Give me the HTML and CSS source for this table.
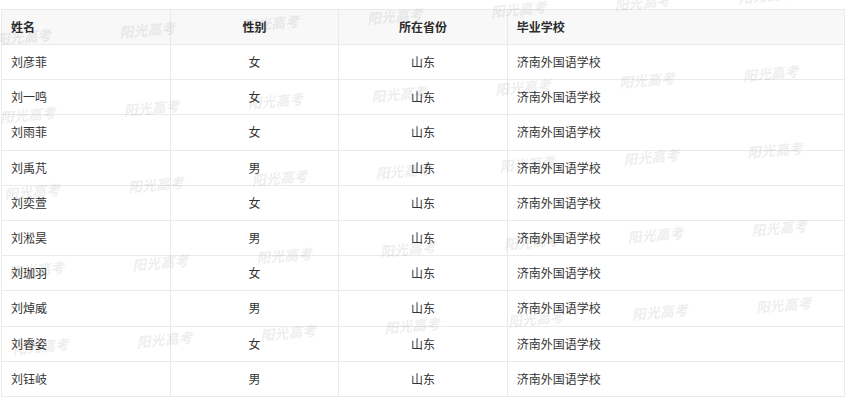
FILE: index.html
```html
<!DOCTYPE html>
<html lang="zh-CN">
<head>
<meta charset="utf-8">
<title>名单</title>
<link rel="stylesheet" href="styles.css">
</head>
<body>
<div class="page">
  <table class="grid-table">
    <colgroup>
      <col class="c-name"><col class="c-sex"><col class="c-prov"><col class="c-school">
    </colgroup>
    <thead>
      <tr class="head-row">
        <th class="left">姓名</th>
        <th class="center">性别</th>
        <th class="center">所在省份</th>
        <th class="left">毕业学校</th>
      </tr>
    </thead>
    <tbody>
      <tr><td class="left">刘彦菲</td><td class="center">女</td><td class="center">山东</td><td class="left">济南外国语学校</td></tr>
      <tr><td class="left">刘一鸣</td><td class="center">女</td><td class="center">山东</td><td class="left">济南外国语学校</td></tr>
      <tr><td class="left">刘雨菲</td><td class="center">女</td><td class="center">山东</td><td class="left">济南外国语学校</td></tr>
      <tr><td class="left">刘禹芃</td><td class="center">男</td><td class="center">山东</td><td class="left">济南外国语学校</td></tr>
      <tr><td class="left">刘奕萱</td><td class="center">女</td><td class="center">山东</td><td class="left">济南外国语学校</td></tr>
      <tr><td class="left">刘淞昊</td><td class="center">男</td><td class="center">山东</td><td class="left">济南外国语学校</td></tr>
      <tr><td class="left">刘珈羽</td><td class="center">女</td><td class="center">山东</td><td class="left">济南外国语学校</td></tr>
      <tr><td class="left">刘焯威</td><td class="center">男</td><td class="center">山东</td><td class="left">济南外国语学校</td></tr>
      <tr><td class="left">刘睿姿</td><td class="center">女</td><td class="center">山东</td><td class="left">济南外国语学校</td></tr>
      <tr><td class="left">刘钰岐</td><td class="center">男</td><td class="center">山东</td><td class="left">济南外国语学校</td></tr>
    </tbody>
  </table>

  <div class="watermark-layer" aria-hidden="true">
    <div class="watermark-grid">
      <span>阳光高考</span><span>阳光高考</span><span>阳光高考</span><span>阳光高考</span><span>阳光高考</span><span>阳光高考</span><span>阳光高考</span>
      <span>阳光高考</span><span>阳光高考</span><span>阳光高考</span><span>阳光高考</span><span>阳光高考</span><span>阳光高考</span><span>阳光高考</span>
      <span>阳光高考</span><span>阳光高考</span><span>阳光高考</span><span>阳光高考</span><span>阳光高考</span><span>阳光高考</span><span>阳光高考</span>
      <span>阳光高考</span><span>阳光高考</span><span>阳光高考</span><span>阳光高考</span><span>阳光高考</span><span>阳光高考</span><span>阳光高考</span>
      <span>阳光高考</span><span>阳光高考</span><span>阳光高考</span><span>阳光高考</span><span>阳光高考</span><span>阳光高考</span><span>阳光高考</span>
    </div>
  </div>
</div>
</body>
</html>
```

FILE: styles.css
```css
html, body {
  margin: 0;
  padding: 0;
  background: #fff;
}

body {
  font-family: "Noto Sans CJK SC", "Noto Sans", sans-serif;
  font-size: 12px;
  color: #333;
}

.page {
  position: relative;
  width: 849px;
  height: 402px;
  overflow: hidden;
  padding: 9px 0 0 1px;
  box-sizing: border-box;
}

.grid-table {
  width: 844px;
  border-collapse: collapse;
  table-layout: fixed;
  border: 1px solid #e8eaec;
}

.c-name, .c-sex, .c-prov { width: 20%; }
.c-school { width: 40%; }

.grid-table th,
.grid-table td {
  border-bottom: 1px solid #e8eaec;
  border-right: 1px solid #e8eaec;
  padding: 0 9px;
  line-height: 16px;
  white-space: nowrap;
}

.grid-table th {
  height: 34px;
  background: #f8f8f9;
  font-weight: 700;
  color: #2b2b2b;
}

.grid-table td {
  height: 34.2px;
}

.left { text-align: left; }
.center { text-align: center; }

.watermark-layer {
  position: absolute;
  inset: 0;
  pointer-events: none;
}

.watermark-grid {
  position: absolute;
  left: -4px;
  top: 30px;
  display: grid;
  grid-template-columns: repeat(7, 124px);
  grid-auto-rows: 77.5px;
  transform: rotate(-3.2deg);
  transform-origin: 0 0;
}

.watermark-grid span {
  display: block;
  font-family: "Noto Sans CJK SC", serif;
  font-size: 14px;
  line-height: 18px;
  font-weight: 900;
  font-style: italic;
  color: rgba(0, 0, 0, 0.075);
  transform: rotate(-2deg);
  transform-origin: 0 50%;
}
```
